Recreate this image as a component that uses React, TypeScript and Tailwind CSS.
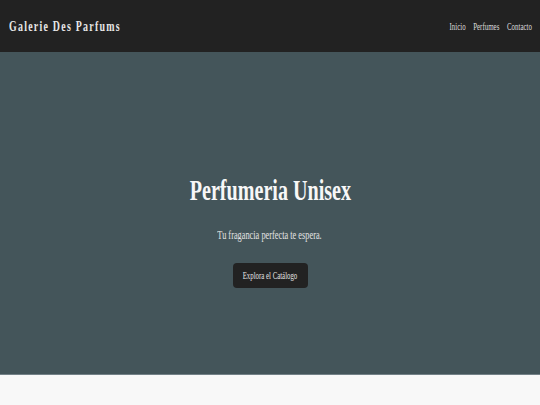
const NAV_LINKS = ["Inicio", "Perfumes", "Contacto"];

export default function App() {
  return (
    <main className="min-h-screen bg-[#f8f8f8] font-['Liberation_Serif','Times_New_Roman',serif]">
      <header className="h-[52px] bg-[#222222] flex items-center justify-between pl-[9px] pr-[8px]">
        <h1 className="inline-block origin-left scale-x-[0.66] whitespace-nowrap text-[15px] leading-[18px] font-bold tracking-[1.9px] text-[#e6e6e6]">
          Galerie Des Parfums
        </h1>
        <nav className="flex items-center gap-3 origin-right scale-x-[0.63] whitespace-nowrap">
          {NAV_LINKS.map((link) => (
            <a key={link} href="#" className="text-[11px] leading-[14px] text-[#dcdcdc]">
              {link}
            </a>
          ))}
        </nav>
      </header>

      {/* Hero */}
      <section className="bg-[#44555a] pt-[120px] pb-[86px] flex flex-col items-center border-b border-[#738187]">
        <h2 className="inline-block scale-x-[0.67] whitespace-nowrap text-[30px] leading-[36px] font-bold text-[#f7f7f7]">
          Perfumeria Unisex
        </h2>
        <p className="mt-[19px] inline-block scale-x-[0.64] whitespace-nowrap text-[13px] leading-[16px] text-[#e4e4e4]">
          Tu fragancia perfecta te espera.
        </p>
        <a
          href="#"
          className="mt-[20px] w-[75px] h-[25px] rounded-[4px] bg-[#222222] flex items-center justify-center"
        >
          <span className="inline-block scale-x-[0.65] whitespace-nowrap text-[10.5px] leading-[14px] text-[#e2e2e2]">
            Explora el Catálogo
          </span>
        </a>
      </section>
    </main>
  );
}
